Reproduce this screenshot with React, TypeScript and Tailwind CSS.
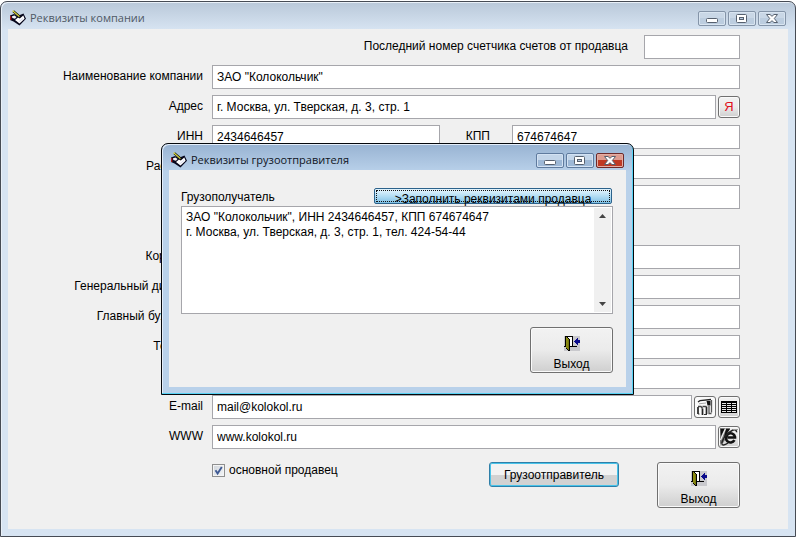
import React from "react";

const textFont = "font-['Liberation_Sans',Arial,sans-serif] text-[12px] text-black";

type Pixel = [number, number, number, number, string];

function Pixels({ size, cells, className = "" }: { size: [number, number]; cells: Pixel[]; className?: string }) {
  return (
    <svg
      aria-hidden="true"
      width={size[0]}
      height={size[1]}
      viewBox={`0 0 ${size[0]} ${size[1]}`}
      shapeRendering="crispEdges"
      className={`shrink-0 ${className}`}
    >
      {cells.map(([x, y, w, h, fill], i) => (
        <rect key={i} x={x} y={y} width={w} height={h} fill={fill} />
      ))}
    </svg>
  );
}

function AppIcon() {
  return (
    <svg aria-hidden="true" width="16" height="16" viewBox="0 0 16 16" className="shrink-0">
      <path d="M0 5.500 4 4l3.500 2L13.500 3.500 16 8.800 9.500 15.500 3.500 11.500 0 10z" fill="#06061c" />
      <path d="M5 10 8 7.600l1.800 1L13.300 5.500l1.300 3.200-5.100 4.900z" fill="#ffffff" />
      <path d="M2 6.300 4.500 5.500l2 1.500L5 8.800 2.300 8z" fill="#f4f4f8" />
      <path d="M8.800 11.800 13 8.300" stroke="#c5caea" strokeWidth="0.700" />
      <path d="M0.700 6v4" stroke="#c01c1c" strokeWidth="1.200" />
      <path d="M3.200 1.200 10 7" stroke="#101008" strokeWidth="2.400" />
      <path d="M2.600 0.600 9.400 6.600" stroke="#ece640" strokeWidth="1.200" />
    </svg>
  );
}

function DoorIcon() {
  return (
    <Pixels
      size={[16, 15]}
      cells={[
        [0, 0, 16, 15, "#c9c9cd"],
        [4, 1, 5, 9, "#ffffff"],
        [1, 0, 8, 1, "#000000"],
        [1, 0, 1, 11, "#000000"],
        [0, 10, 2, 1, "#000000"],
        [2, 1, 1, 11, "#8a8a12"],
        [3, 2, 1, 11, "#8a8a12"],
        [4, 3, 1, 11, "#77770c"],
        [3, 1, 1, 1, "#000000"],
        [4, 2, 1, 1, "#000000"],
        [5, 3, 1, 12, "#000000"],
        [2, 12, 1, 1, "#000000"],
        [3, 13, 1, 1, "#000000"],
        [4, 14, 1, 1, "#000000"],
        [8, 0, 1, 11, "#000000"],
        [6, 10, 7, 1, "#000000"],
        [10, 5, 1, 1, "#0c0c8c"],
        [11, 4, 1, 3, "#0c0c8c"],
        [12, 3, 1, 5, "#0c0c8c"],
        [13, 2, 1, 7, "#0c0c8c"],
        [14, 4, 2, 3, "#0c0c8c"],
      ]}
    />
  );
}

function MailIcon() {
  return (
    <svg aria-hidden="true" width="20" height="20" viewBox="0 0 20 20">
      <path d="M1 1h18v18H1z" fill="#fafafa" />
      <path d="M3 5 5 3.600 16 2.500" stroke="#222" fill="none" strokeWidth="1.300" />
      <path d="M4 6.800 11 6" stroke="#aaa" strokeWidth="1" />
      <path d="M11.500 4h4v4.500h-3z" fill="#111" />
      <path d="M16.500 3v12.500M14 9v7.500h2.500" stroke="#555" fill="none" strokeWidth="1.300" />
      <path d="M3 10v7M7.500 11.500V18M11.500 9.500V17" stroke="#222" strokeWidth="1.700" />
      <path d="M3 9.500h3l1.500 2M7.500 9.500h4" stroke="#444" strokeWidth="1.300" fill="none" />
      <path d="M3 17h1.500M9 17.500h3" stroke="#333" />
    </svg>
  );
}

function TableIcon() {
  return (
    <svg aria-hidden="true" width="16" height="12" viewBox="0 0 16 12" shapeRendering="crispEdges">
      <path d="M0 0h16v12H0z" fill="#000" />
      <path d="M1 2.500h14M1 4.500h14M1 6.500h14M1 8.500h14M1 10.500h14" stroke="#e8e8e8" />
      <path d="M5.500 1v11M10.500 1v11" stroke="#000" />
    </svg>
  );
}

function BrowserIcon() {
  return (
    <svg aria-hidden="true" width="20" height="20" viewBox="0 0 20 20">
      <path d="M1 1h10v5L4 16l-3 1z" fill="#777" />
      <path d="M1.500 2h4L2 9zM7 2h4L4.500 12z" fill="#111" />
      <path d="M6.500 1.500 1.500 13M12 2 5 12" stroke="#f2f2f2" strokeWidth="1.200" />
      <path
        d="M15.500 13.200A4.600 4.600 0 1 1 16 9.800v0.700H8.500"
        fill="none"
        stroke="#111"
        strokeWidth="2.600"
      />
      <path
        d="M3 17.500C2 14 8 5.500 13.500 3.200c2.500-.9 4.500 0 4 2M3 17.500c1.500 1 4 0 6-1.500"
        fill="none"
        stroke="#222"
        strokeWidth="1.500"
      />
      <path d="M14 2.500h5M1 18.500l2-2" stroke="#999" />
    </svg>
  );
}

function WindowButtons({ active }: { active?: boolean }) {
  const base = "flex h-[15px] w-7 items-center justify-center rounded-[2px] border";
  const plain = active
    ? "border-[#5f7b9e] bg-linear-to-b from-[#c3d5e9] from-50% to-[#9db8d6] to-50% shadow-[inset_0_0_0_1px_#d3e2f3]"
    : "border-[#8494a8] bg-linear-to-b from-[#c9d7e6] from-50% to-[#bccddf] to-50% shadow-[inset_0_0_0_1px_#d8e4f0]";
  const close = active
    ? "border-[#6e2a2a] bg-linear-to-b from-[#dd9c90] from-50% to-[#bf3a24] to-50% shadow-[inset_0_0_0_1px_#e3aea4]"
    : plain;
  return (
    <div className="flex gap-0.5">
      <button type="button" aria-label="Свернуть" className={`${base} ${plain}`}>
        <svg aria-hidden="true" width="12" height="9" viewBox="0 0 12 9">
          <rect x="0.500" y="4.500" width="11" height="4" rx="1" fill="#fff" stroke="#56606e" />
        </svg>
      </button>
      <button type="button" aria-label="Развернуть" className={`${base} ${plain}`}>
        <svg aria-hidden="true" width="12" height="9" viewBox="0 0 12 9">
          <rect x="0.500" y="0.500" width="10" height="8" rx="1" fill="#fff" stroke="#56606e" />
          <rect x="3.500" y="3.500" width="4" height="2" fill="#b9cbe0" stroke="#56606e" />
        </svg>
      </button>
      <button type="button" aria-label="Закрыть" className={`${base} ${close}`}>
        <svg aria-hidden="true" width="12" height="9" viewBox="0 0 12 9">
          <path
            d="M0.500 0.500H4L6 2.300 8 0.500h3.500L8.300 4.500l3.200 4H8L6 6.700 4 8.500H0.500L3.700 4.500z"
            fill="#fff"
            stroke="#56606e"
            strokeLinejoin="round"
          />
        </svg>
      </button>
    </div>
  );
}

function TitleBar({ title, active }: { title: string; active?: boolean }) {
  return (
    <header className="flex items-center justify-between pr-0.5">
      <div className="flex items-center gap-1 pl-0.5">
        <AppIcon />
        <h1
          className={`font-['Open_Sans','Noto_Sans',sans-serif] text-[11px] leading-4 ${
            active ? "text-[#10161f]" : "text-[#4f5965]"
          }`}
        >
          {title}
        </h1>
      </div>
      <WindowButtons active={active} />
    </header>
  );
}

function Field({ id, value = "", label, className = "" }: { id: string; value?: string; label?: string; className?: string }) {
  return (
    <input
      id={id}
      type="text"
      defaultValue={value}
      aria-label={label}
      className={`h-6 min-w-0 flex-1 border border-[#a6a6ab] bg-white px-1 outline-none ${className}`}
    />
  );
}

function Row({ id, label, children }: { id: string; label?: string; children: React.ReactNode }) {
  return (
    <div className="grid grid-cols-[196px_1fr] gap-2">
      <label htmlFor={id} className="pr-px text-right leading-[22px] whitespace-nowrap">
        {label}
      </label>
      <div className="flex gap-0.5">{children}</div>
    </div>
  );
}

const buttonFace =
  "border border-[#707070] bg-linear-to-b from-[#f2f2f2] via-[#ebebeb] via-50% to-[#cfcfcf] shadow-[inset_0_0_0_1px_#fafafa]";

function IconButton({ label, children }: { label: string; children: React.ReactNode }) {
  return (
    <button
      type="button"
      aria-label={label}
      className={`mt-px flex size-[22px] items-center justify-center rounded-[3px] ${buttonFace}`}
    >
      {children}
    </button>
  );
}

function ExitButton() {
  return (
    <button type="button" className={`flex h-[46px] w-[83px] flex-col items-center gap-[5px] rounded-[3px] pt-2 ${buttonFace}`}>
      <DoorIcon />
      <span className="leading-4">Выход</span>
    </button>
  );
}

function ShipperDialog() {
  return (
    <section
      role="dialog"
      aria-label="Реквизиты грузоотправителя"
      className="absolute top-[143px] left-[161px] w-[473px] rounded-t-[7px] border border-[#05080c] bg-[#b9d1ea] bg-linear-to-b from-[#98b3d2] to-[#b9d1ea] to-[28px] px-[7px] pt-2 pb-[7px] shadow-[inset_-1px_-1px_0_#56d3f5,inset_1px_1px_0_#e4eefa]"
    >
      <TitleBar title="Реквизиты грузоотправителя" active />
      <div className="mt-0.5 flex flex-col bg-[#f0f0f0] pt-[18px] pr-[13px] pb-[14px] pl-3">
        <div className="flex h-[18px] justify-between">
          <label htmlFor="consignee" className="leading-[18px]">
            Грузополучатель
          </label>
          <button
            type="button"
            className="mr-px h-4 w-[238px] rounded-[2px] border border-[#2c628b] bg-linear-to-b from-[#dff2fc] from-10% via-[#b4def4] via-50% to-[#7fc0e4] p-px"
          >
            <span className="block h-3 border border-dotted border-[#111] leading-[16px] whitespace-nowrap">
              &gt;Заполнить реквизитами продавца
            </span>
          </button>
        </div>
        <div className="flex h-[108px] border border-[#a6a6ab] bg-white">
          <textarea
            id="consignee"
            defaultValue={
              'ЗАО "Колокольчик", ИНН 2434646457, КПП 674674647\nг. Москва, ул. Тверская, д. 3, стр. 1, тел. 424-54-44'
            }
            className="min-w-0 flex-1 resize-none overflow-hidden px-1 py-[3px] leading-[15px] outline-none"
          />
          <div className="my-px mr-px flex w-[17px] flex-col items-center justify-between bg-[#f0f0f0] py-1.5">
            <svg aria-hidden="true" width="7" height="4" viewBox="0 0 7 4">
              <path d="M0 4 3.500 0 7 4z" fill="#444" />
            </svg>
            <svg aria-hidden="true" width="7" height="4" viewBox="0 0 7 4">
              <path d="M0 0h7L3.500 4z" fill="#444" />
            </svg>
          </div>
        </div>
        <div className="flex justify-end pt-[13px]">
          <ExitButton />
        </div>
      </div>
    </section>
  );
}

export default function App() {
  return (
    <div className={`relative bg-white pt-px pr-0.5 pb-0.5 ${textFont}`}>
      <main className="rounded-t-[7px] border border-[#464b54] bg-[#d7e4f2] bg-linear-to-b from-[#b9c8d9] to-[#d7e4f2] to-[28px] px-[7px] pt-2 pb-[7px] shadow-[inset_1px_1px_0_#e9f0f8]">
        <TitleBar title="Реквизиты компании" />
        <form className="mt-[3px] bg-[#f0f0f0] pt-1.5 pr-12 pb-[21px]" onSubmit={(e) => e.preventDefault()}>
          <div className="flex flex-col gap-1.5">
            <div className="flex justify-end gap-4">
              <label htmlFor="counter" className="leading-[22px]">
                Последний номер счетчика счетов от продавца
              </label>
              <Field id="counter" className="max-w-24" />
            </div>
            <Row id="company" label="Наименование компании">
              <Field id="company" value={'ЗАО "Колокольчик"'} />
            </Row>
            <Row id="address" label="Адрес">
              <Field id="address" value="г. Москва, ул. Тверская, д. 3, стр. 1" />
              <IconButton label="Я">
                <span className="text-[13px] text-[#e0101c]">Я</span>
              </IconButton>
            </Row>
            <Row id="inn" label="ИНН">
              <Field id="inn" value="2434646457" />
              <label htmlFor="kpp" className="w-[68px] pr-5 text-right leading-[22px]">
                КПП
              </label>
              <Field id="kpp" value="674674647" />
            </Row>
            <Row id="account" label="Расч. счет">
              <Field id="account" />
            </Row>
            <Row id="bank">
              <Field id="bank" label="Банк" />
            </Row>
            <div className="h-6" />
            <Row id="corr" label="Корр. счет">
              <Field id="corr" />
            </Row>
            <Row id="director" label="Генеральный директор">
              <Field id="director" />
            </Row>
            <Row id="accountant" label="Главный бухгалтер">
              <Field id="accountant" />
            </Row>
            <Row id="phone" label="Телефон">
              <Field id="phone" />
            </Row>
            <Row id="fax">
              <Field id="fax" label="Факс" />
            </Row>
            <Row id="email" label="E-mail">
              <Field id="email" value="mail@kolokol.ru" />
              <IconButton label="Написать письмо">
                <MailIcon />
              </IconButton>
              <IconButton label="Список адресов">
                <TableIcon />
              </IconButton>
            </Row>
            <Row id="www" label="WWW">
              <Field id="www" value="www.kolokol.ru" />
              <IconButton label="Открыть сайт">
                <BrowserIcon />
              </IconButton>
            </Row>
          </div>
          <div className="mt-[13px] flex items-start pl-[204px]">
            <label className="flex h-4 flex-1 items-center gap-1">
              <span className="grid">
                <input
                  type="checkbox"
                  defaultChecked
                  className="peer col-start-1 row-start-1 size-[13px] appearance-none border border-[#8e8f8f] bg-linear-to-br from-[#cfd4da] to-[#f4f6f8] shadow-[inset_0_0_0_1px_#f4f4f4]"
                />
                <svg
                  aria-hidden="true"
                  viewBox="0 0 13 13"
                  className="pointer-events-none invisible col-start-1 row-start-1 size-[13px] peer-checked:visible"
                >
                  <path d="M3.500 6.200 5.600 9.400 9.800 3" fill="none" stroke="#3f5a94" strokeWidth="1.900" />
                </svg>
              </span>
              основной продавец
            </label>
            <button
              type="button"
              className="mr-[38px] h-[25px] w-[130px] rounded-[3px] border border-[#2f7fa8] bg-linear-to-b from-[#f2f2f2] from-50% to-[#d2d2d2] to-50% shadow-[inset_0_0_0_1px_#48c4ea]"
            >
              Грузоотправитель
            </button>
            <ExitButton />
          </div>
        </form>
      </main>
      <ShipperDialog />
    </div>
  );
}
